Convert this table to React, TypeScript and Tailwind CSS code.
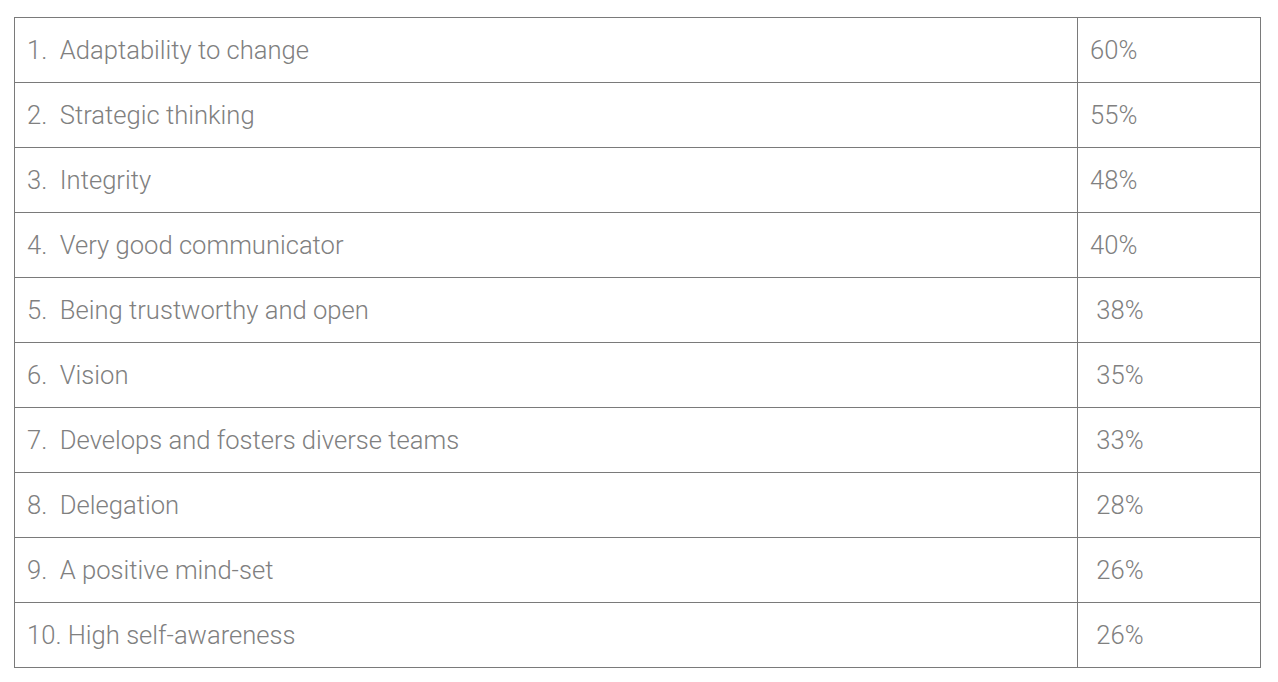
import React from "react";

const rows: [string, string][] = [
  ["1.\u00a0 Adaptability to change", "60%"],
  ["2.\u00a0 Strategic thinking", "55%"],
  ["3.\u00a0 Integrity", "48%"],
  ["4.\u00a0 Very good communicator", "40%"],
  ["5.\u00a0 Being trustworthy and open", "\u00a038%"],
  ["6.\u00a0 Vision", "\u00a035%"],
  ["7.\u00a0 Develops and fosters diverse teams", "\u00a033%"],
  ["8.\u00a0 Delegation", "\u00a028%"],
  ["9.\u00a0 A positive mind-set", "\u00a026%"],
  ["10. High self-awareness", "\u00a026%"],
];

export default function App() {
  return (
    <div className="min-h-[682px] bg-white pt-[17px] pl-[14px]" style={{ fontFamily: "Roboto, 'Liberation Sans', sans-serif" }}>
      <div className="w-[1247px] border border-[#7a7a7a] divide-y divide-[#7a7a7a]">
        {rows.map(([label, pct], i) => (
          <div key={i} className="flex h-[64px] box-content">
            <div className="w-[1062px] flex items-center pl-[12px] text-[25.6px] font-light text-[#808080] whitespace-pre">
              {label}
            </div>
            <div className="flex-1 border-l border-[#7a7a7a] flex items-center pl-[12px] text-[25.6px] font-light text-[#808080] whitespace-pre">
              {pct}
            </div>
          </div>
        ))}
      </div>
    </div>
  );
}
